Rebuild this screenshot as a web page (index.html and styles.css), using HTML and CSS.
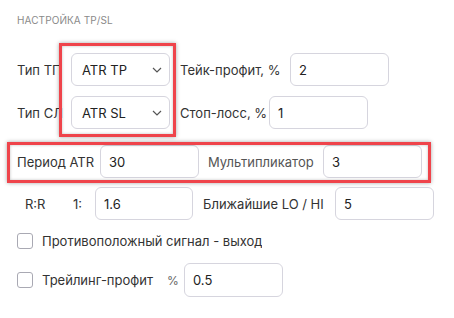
FILE: index.html
```html
<!DOCTYPE html>
<html lang="ru">
<head>
  <meta charset="UTF-8">
  <title>Настройка TP/SL</title>
  <link rel="stylesheet" href="styles.css">
</head>
<body>

<div class="panel">
  <div class="title">НАСТРОЙКА TP/SL</div>

  <!-- тип TP -->
  <div class="row row-tp">
    <span class="lbl lbl-type">Тип ТП</span>
    <div class="select"><span>ATR TP</span><svg width="10" height="6" viewBox="0 0 10 6"><path d="M1 1l4 4 4-4" fill="none" stroke="#555" stroke-width="1.2"/></svg></div>
    <span class="lbl lbl-tp">Тейк-профит, %</span>
    <div class="field">2</div>
  </div>

  <!-- тип SL -->
  <div class="row row-sl">
    <span class="lbl lbl-type">Тип СЛ</span>
    <div class="select"><span>ATR SL</span><svg width="10" height="6" viewBox="0 0 10 6"><path d="M1 1l4 4 4-4" fill="none" stroke="#555" stroke-width="1.2"/></svg></div>
    <span class="lbl lbl-sl">Стоп-лосс, %</span>
    <div class="field">1</div>
  </div>

  <div class="row row-atr">
    <span class="lbl lbl-period">Период ATR</span>
    <div class="field">30</div>
    <span class="lbl lbl-mult">Мультипликатор</span>
    <div class="field">3</div>
  </div>

  <div class="row row-rr">
    <span class="lbl lbl-rr">R:R</span>
    <span class="lbl lbl-one">1:</span>
    <div class="field field-rr">1.6</div>
    <span class="lbl lbl-near">Ближайшие LO / HI</span>
    <div class="field">5</div>
  </div>

  <div class="row row-check">
    <span class="check"></span>
    <span class="lbl">Противоположный сигнал - выход</span>
  </div>

  <div class="row row-trail">
    <span class="check"></span>
    <span class="lbl lbl-trail">Трейлинг-профит</span>
    <span class="lbl lbl-pct">%</span>
    <div class="field">0.5</div>
  </div>

  <!-- выделения -->
  <div class="mark mark-select"></div>
  <div class="mark mark-atr"></div>
</div>

</body>
</html>
```

FILE: styles.css
```css
body {
  margin: 0;
  background: #fff;
  font-family: Inter, "Noto Sans", sans-serif;
  color: #333;
}

.panel {
  position: relative;
  width: 454px;
  height: 318px;
  padding-left: 17px;
  box-sizing: border-box;
}

.title {
  padding-top: 13px;
  height: 14px;
  line-height: 14px;
  font-size: 10px;
  color: #8a8a8a;
  letter-spacing: 0.1px;
}

.row {
  display: flex;
  align-items: center;
  height: 33px;
}
.row-tp { margin-top: 26px; }
.row-sl { margin-top: 10px; }
.row-atr { margin-top: 16px; }
.row-rr { margin-top: 9px; }
.row-check { margin-top: 13px; height: 16px; }
.row-trail { margin-top: 14px; height: 34px; }

.lbl {
  font-size: 13px;
  white-space: nowrap;
  overflow: hidden;
}
.lbl-type { width: 54px; }
.lbl-tp { width: 110px; margin-left: 10px; }
.lbl-sl { width: 89px; margin-left: 10px; }
.lbl-period { width: 83px; }
.lbl-mult {
  width: 115px;
  margin-left: 9px;
  color: #555;
}
.lbl-rr { width: 48px; padding-left: 8px; }
.lbl-one { width: 22px; }
.lbl-near { width: 132px; margin-left: 10px; }
.lbl-trail { width: 125px; }
.lbl-pct { width: 17px; color: #666; font-size: 12px; }

.select,
.field {
  box-sizing: border-box;
  width: 99px;
  height: 33px;
  border: 1px solid #d6d5de;
  border-radius: 6px;
  background: #fff;
  font-size: 13px;
  color: #222;
  display: flex;
  align-items: center;
}
.field { padding-left: 8px; }
.field-rr { width: 98px; }
.row-trail .field { height: 34px; }

.select {
  justify-content: space-between;
  padding: 0 7px 0 10px;
}

.check {
  box-sizing: border-box;
  width: 16px;
  height: 16px;
  border: 1px solid #a9a9b3;
  border-radius: 3px;
  margin-right: 9px;
}

/* красные рамки поверх формы */
.mark {
  position: absolute;
  border: 3px solid #ef444b;
  box-shadow: 0 0 4px rgba(0, 0, 0, 0.35), inset 0 0 3px rgba(0, 0, 0, 0.25);
}
.mark-select {
  left: 59px;
  top: 43px;
  width: 111px;
  height: 88px;
}
.mark-atr {
  left: 7px;
  top: 142px;
  width: 418px;
  height: 35px;
}
```
